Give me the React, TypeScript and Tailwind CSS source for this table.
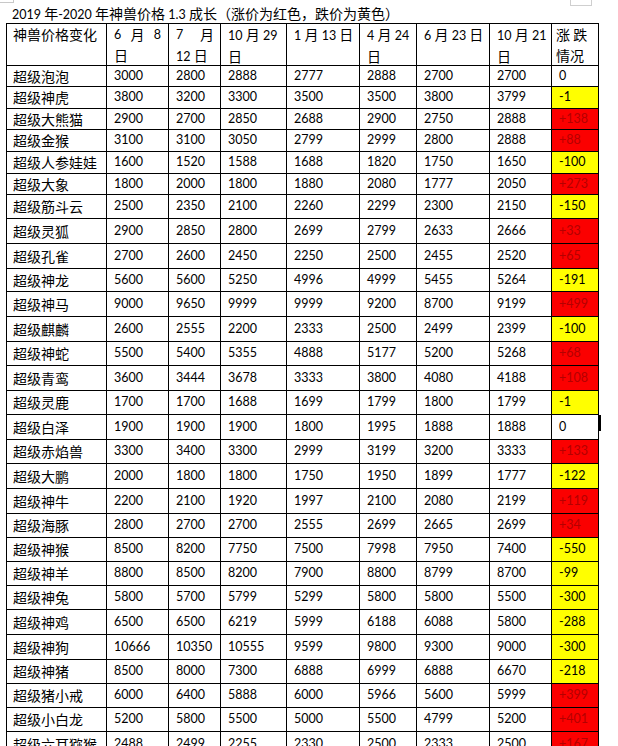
import React from 'react';

type Row = [string, string, string, string, string, string, string, string, string];

const rows: Row[] = [
  ['超级泡泡', '3000', '2800', '2888', '2777', '2888', '2700', '2700', '0'],
  ['超级神虎', '3800', '3200', '3300', '3500', '3500', '3800', '3799', '-1'],
  ['超级大熊猫', '2900', '2700', '2850', '2688', '2900', '2750', '2888', '+138'],
  ['超级金猴', '3100', '3100', '3050', '2799', '2999', '2800', '2888', '+88'],
  ['超级人参娃娃', '1600', '1520', '1588', '1688', '1820', '1750', '1650', '-100'],
  ['超级大象', '1800', '2000', '1800', '1880', '2080', '1777', '2050', '+273'],
  ['超级筋斗云', '2500', '2350', '2100', '2260', '2299', '2300', '2150', '-150'],
  ['超级灵狐', '2900', '2850', '2800', '2699', '2799', '2633', '2666', '+33'],
  ['超级孔雀', '2700', '2600', '2450', '2250', '2500', '2455', '2520', '+65'],
  ['超级神龙', '5600', '5600', '5250', '4996', '4999', '5455', '5264', '-191'],
  ['超级神马', '9000', '9650', '9999', '9999', '9200', '8700', '9199', '+499'],
  ['超级麒麟', '2600', '2555', '2200', '2333', '2500', '2499', '2399', '-100'],
  ['超级神蛇', '5500', '5400', '5355', '4888', '5177', '5200', '5268', '+68'],
  ['超级青鸾', '3600', '3444', '3678', '3333', '3800', '4080', '4188', '+108'],
  ['超级灵鹿', '1700', '1700', '1688', '1699', '1799', '1800', '1799', '-1'],
  ['超级白泽', '1900', '1900', '1900', '1800', '1995', '1888', '1888', '0'],
  ['超级赤焰兽', '3300', '3400', '3300', '2999', '3199', '3200', '3333', '+133'],
  ['超级大鹏', '2000', '1800', '1800', '1750', '1950', '1899', '1777', '-122'],
  ['超级神牛', '2200', '2100', '1920', '1997', '2100', '2080', '2199', '+119'],
  ['超级海豚', '2800', '2700', '2700', '2555', '2699', '2665', '2699', '+34'],
  ['超级神猴', '8500', '8200', '7750', '7500', '7998', '7950', '7400', '-550'],
  ['超级神羊', '8800', '8500', '8200', '7900', '8800', '8799', '8700', '-99'],
  ['超级神兔', '5800', '5700', '5799', '5299', '5800', '5800', '5500', '-300'],
  ['超级神鸡', '6500', '6500', '6219', '5999', '6188', '6088', '5800', '-288'],
  ['超级神狗', '10666', '10350', '10555', '9599', '9800', '9300', '9000', '-300'],
  ['超级神猪', '8500', '8000', '7300', '6888', '6999', '6888', '6670', '-218'],
  ['超级猪小戒', '6000', '6400', '5888', '6000', '5966', '5600', '5999', '+399'],
  ['超级小白龙', '5200', '5800', '5500', '5000', '5500', '4799', '5200', '+401'],
  ['超级六耳猕猴', '2488', '2499', '2255', '2330', '2500', '2333', '2500', '+167'],
];

// latin runs in Lato (stand-in for Calibri), CJK runs in Noto
const Txt = ({ s }: { s: string }) => {
  const parts = s.split(/([\u3000-\u303f\u4e00-\u9fff\uff00-\uffef]+)/);
  return (
    <>
      {parts.map((p, i) =>
        i % 2 === 1 ? (
          <span key={i}>{p}</span>
        ) : p ? (
          <span key={i} className="font-['Lato',sans-serif] text-[12.5px]">
            {p}
          </span>
        ) : null
      )}
    </>
  );
};

const Head = ({ children, className = '' }: { children: React.ReactNode; className?: string }) => (
  <div className={'bg-white leading-[21px] whitespace-nowrap ' + className}>{children}</div>
);

const changeBg = (v: string) => {
  if (v.startsWith('+')) return 'bg-[#fb0000] text-[#b40000]';
  if (v.startsWith('-')) return 'bg-[#ffff00] text-black';
  return 'bg-white text-black';
};

export default function App() {
  return (
    <div className="relative w-[618px] h-[746px] overflow-hidden bg-white text-black font-['Noto_Sans_CJK_SC',sans-serif] text-[14px]">
      <div className="absolute left-0 top-[2px] w-[13px] h-px bg-[#c8c8c8]" />
      <div className="absolute left-[13px] top-0 w-px h-[3px] bg-[#c8c8c8]" />
      <div className="absolute left-[570px] top-[-5px] w-[22px] h-[11px] border border-[#cfcfcf]" />

      <div className="h-[23px] pt-[3px] pl-[12px] leading-[20px] whitespace-nowrap">
        <Txt s="2019 年-2020 年神兽价格 1.3 成长（涨价为红色，跌价为黄色）" />
      </div>

      <div className="ml-[6px] w-[593px] bg-black p-px grid gap-px grid-cols-[99px_61px_51px_65px_72px_56px_72px_61px_46px] grid-rows-[41px_20px_21px_20px_21px_21px_20px_23px_24px_24px_22px_24px_24px_23px_24px_23px_24px_23px_24px_24px_23px_23px_23px_23px_24px_24px_23px_23px_23px_24px]">
        <Head className="pl-[6px]">神兽价格变化</Head>
        <Head className="pl-[7px] pr-[7px]">
          <div className="flex justify-between">
            <Txt s="6" />
            <span>月</span>
            <Txt s="8" />
          </div>
          <div>日</div>
        </Head>
        <Head className="pl-[7px] pr-[6px]">
          <div className="flex justify-between">
            <Txt s="7" />
            <span>月</span>
          </div>
          <div>
            <Txt s="12 日" />
          </div>
        </Head>
        <Head className="pl-[7px]">
          <div>
            <Txt s="10 月 29" />
          </div>
          <div>日</div>
        </Head>
        <Head className="pl-[7px]">
          <Txt s="1 月 13 日" />
        </Head>
        <Head className="pl-[7px]">
          <div>
            <Txt s="4 月 24" />
          </div>
          <div>日</div>
        </Head>
        <Head className="pl-[7px]">
          <Txt s="6 月 23 日" />
        </Head>
        <Head className="pl-[7px]">
          <div>
            <Txt s="10 月 21" />
          </div>
          <div>日</div>
        </Head>
        <Head className="pl-[4px]">
          <div>涨 跌</div>
          <div>情况</div>
        </Head>

        {rows.map((r, ri) =>
          r.map((v, ci) => {
            if (ci === 0)
              return (
                <div key={ri + '-' + ci} className="bg-white flex items-center pl-[6px] whitespace-nowrap">
                  {v}
                </div>
              );
            const last = ci === 8;
            return (
              <div
                key={ri + '-' + ci}
                className={
                  'relative flex items-center pl-[7px] whitespace-nowrap ' + (last ? changeBg(v) : 'bg-white')
                }
              >
                <Txt s={v} />
                {last && r[0] === '超级白泽' && (
                  <div className="absolute right-[-3px] top-0 w-[3px] h-[16px] bg-black" />
                )}
              </div>
            );
          })
        )}
      </div>
    </div>
  );
}
